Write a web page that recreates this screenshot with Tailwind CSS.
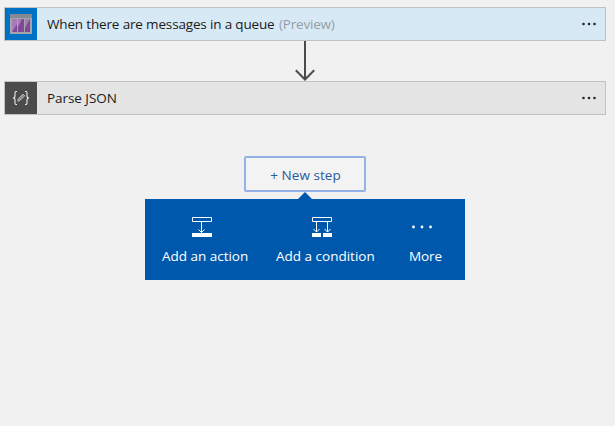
<!DOCTYPE html>
<html lang="en">
<head>
<meta charset="utf-8">
<title>Workflow designer</title>
<script src="https://cdn.jsdelivr.net/npm/@tailwindcss/browser@4"></script>
</head>
<body class="h-[426px] w-[615px] overflow-hidden bg-[#f1f1f1] pt-[7px] pl-1 font-['Segoe_UI','Open_Sans',sans-serif] text-[13.5px] leading-5 text-[#1b1b1b]">
<main class="flex w-[602px] flex-col items-center">
  <section class="flex h-[34px] w-full items-center border border-[#bcc3c8] bg-[#d7e9f5]">
    <div class="flex size-8 shrink-0 items-center justify-center bg-[#0072c6]">
      <svg class="h-5 w-[22px]" viewBox="0 0 22 20">
        <path fill="#a3a5aa" d="M0 0h22v20H0z"/>
        <path fill="#858991" d="M0 0h22v4H0z"/>
        <path fill="#804998" d="M2 5h5v13H2zM8 5h6v13H8zM15 5h5v13h-5z"/>
        <path fill="#a77bb8" d="M2 5h5v5l-5 8zM8 5h4l-4 8zM15 5h5l-5 9z"/>
      </svg>
    </div>
    <p class="ml-[10px] whitespace-nowrap"><span class="tracking-[-0.16px]">When there are messages in a queue</span> <span class="ml-[1px] tracking-[-0.2px] text-[#969ea7]">(Preview)</span></p>
    <svg class="mr-[9px] ml-auto h-1 w-[14px]" viewBox="0 0 14 4" fill="#262626"><circle cx="1.500" cy="2" r="1.300"/><circle cx="7" cy="2" r="1.300"/><circle cx="12.500" cy="2" r="1.300"/></svg>
  </section>

  <svg class="h-10 w-5" viewBox="0 0 20 40" fill="none" stroke="#4b4b4b" stroke-width="2"><path d="M10 0v38.500M.8 29.300l9.200 9.200 9.200-9.200"/></svg>

  <section class="flex h-[34px] w-full items-center border border-[#c2c2c2] bg-[#e4e4e4]">
    <div class="flex size-8 shrink-0 items-center justify-center bg-[#4b4b4b]">
      <svg class="h-4 w-[18px]" viewBox="0 0 18 16" fill="none" stroke="#ededed" stroke-width="1.100">
        <path d="M5 1.500H4Q3 1.500 3 3v3Q3 8 1 8q2 0 2 2v3q0 1.500 1 1.500h1M13 1.500h1q1 0 1 1.500v3q0 2 2 2-2 0-2 2v3q0 1.500-1 1.500h-1"/>
        <path d="M5.800 11.200l.6-2.500 4.600-4.600 1.700 1.700-4.600 4.600z" stroke="#c4c4c4" stroke-width=".9" fill="#8c8c8c"/>
      </svg>
    </div>
    <p class="ml-[10px] whitespace-nowrap tracking-[-0.05px]">Parse JSON</p>
    <svg class="mr-[9px] ml-auto h-1 w-[14px]" viewBox="0 0 14 4" fill="#262626"><circle cx="1.500" cy="2" r="1.300"/><circle cx="7" cy="2" r="1.300"/><circle cx="12.500" cy="2" r="1.300"/></svg>
  </section>

  <button class="mt-[41px] h-9 w-[122px] rounded-[2px] border-2 border-[#94b1e8] bg-[#f3f3f3] pt-[2px] pl-[1px] tracking-[0.06px] text-[#2959a0]">+ New step</button>
  <svg class="h-[7px] w-[14px]" viewBox="0 0 14 7" fill="#0058ad"><path d="M0 7l7-7 7 7z"/></svg>

  <nav class="flex h-[81px] w-[320px] bg-[#0058ad] pl-[17px] text-white">
    <div class="flex w-[86px] flex-col items-start pt-[18px]">
      <svg class="ml-[30px] h-5 w-5" viewBox="0 0 20 20" fill="none" stroke="#fff"><path d="M.5.5h19v4H.5zM9.500 5v10.500"/><path d="M6.500 12.500l3 3 3-3"/><path fill="#fff" stroke="none" d="M0 16h20v4H0z"/></svg>
      <span class="mt-[9px] whitespace-nowrap tracking-[-0.02px]">Add an action</span>
    </div>
    <div class="ml-7 flex w-[99px] flex-col items-start pt-[18px]">
      <svg class="ml-[36px] h-5 w-5" viewBox="0 0 20 20" fill="none" stroke="#fff"><path d="M.5.5h19v4H.5zM4.500 5v10M15.500 5v10"/><path d="M1.500 12l3 3 3-3M12.500 12l3 3 3-3"/><path fill="#fff" stroke="none" d="M0 16h9v4H0zM11 16h9v4h-9z"/></svg>
      <span class="mt-[9px] whitespace-nowrap">Add a condition</span>
    </div>
    <div class="ml-[34px] flex w-[33px] flex-col items-start pt-[18px]">
      <svg class="ml-[2px] h-5 w-[22px]" viewBox="0 0 22 20" fill="#fff"><circle cx="2.500" cy="10" r="1.400"/><circle cx="11" cy="10" r="1.400"/><circle cx="19.500" cy="10" r="1.400"/></svg>
      <span class="mt-[9px] whitespace-nowrap tracking-[-0.1px]">More</span>
    </div>
  </nav>
</main>
</body>
</html>
